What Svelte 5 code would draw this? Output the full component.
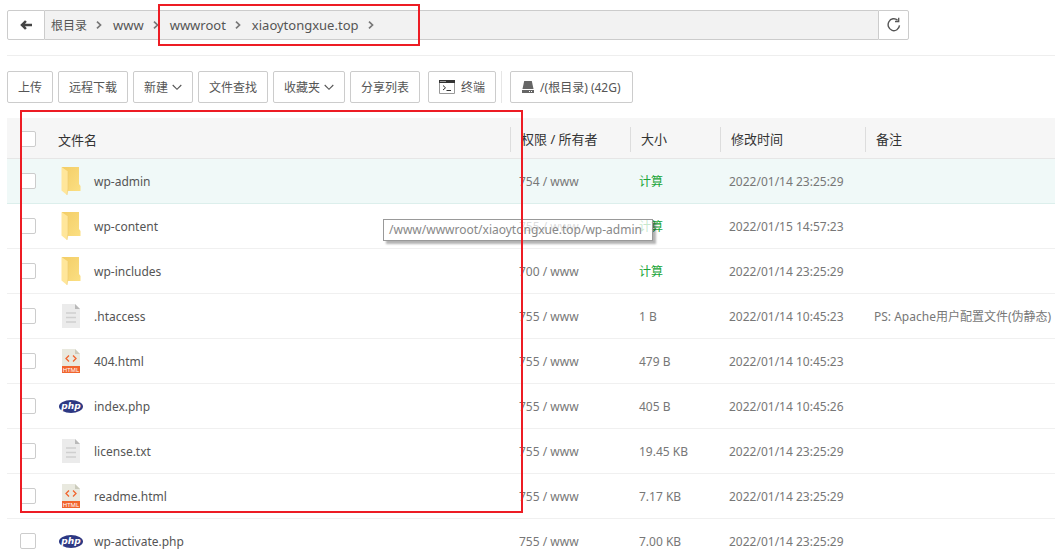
<script>
	let selected = [];
	let allChecked = false;

	const crumbs = ['根目录', 'www', 'wwwroot', 'xiaoytongxue.top'];

	const files = [
		{ name: 'wp-admin', type: 'folder', access: '754 / www', time: '2022/01/14 23:25:29' },
		{ name: 'wp-content', type: 'folder', access: '755 / www', time: '2022/01/15 14:57:23' },
		{ name: 'wp-includes', type: 'folder', access: '700 / www', time: '2022/01/14 23:25:29' },
		{
			name: '.htaccess',
			type: 'text',
			access: '755 / www',
			size: '1 B',
			time: '2022/01/14 10:45:23',
			note: 'PS: Apache用户配置文件(伪静态)'
		},
		{ name: '404.html', type: 'html', access: '755 / www', size: '479 B', time: '2022/01/14 10:45:23' },
		{ name: 'index.php', type: 'php', access: '755 / www', size: '405 B', time: '2022/01/14 10:45:26' },
		{ name: 'license.txt', type: 'text', access: '755 / www', size: '19.45 KB', time: '2022/01/14 23:25:29' },
		{ name: 'readme.html', type: 'html', access: '755 / www', size: '7.17 KB', time: '2022/01/14 23:25:29' },
		{ name: 'wp-activate.php', type: 'php', access: '755 / www', size: '7.00 KB', time: '2022/01/14 23:25:29' }
	];

	const toggleAll = () => {
		selected = allChecked ? files.map((file) => file.name) : [];
	};
</script>

<div class="file-manager">
	<nav class="path" aria-label="路径">
		<button class="path__back" aria-label="返回上一级">
			<svg width="12" height="10" viewBox="0 0 12 10">
				<path d="M5 0.2 0.2 5 5 9.8 6.8 8.2 5 6.3H12V3.7H5L6.8 1.8z" fill="#444" />
			</svg>
		</button>
		<div class="path__crumbs">
			{#each crumbs as crumb}
				<a class="path__link" href="#{crumb}">{crumb}</a>
				<svg class="path__arrow" width="6" height="8" viewBox="0 0 6 8">
					<path d="M1 0.7 4.5 4 1 7.3" fill="none" stroke="#777" stroke-width="1.7" />
				</svg>
			{/each}
		</div>
		<button class="path__refresh" aria-label="刷新">
			<svg width="14" height="16" viewBox="0 0 14 16">
				<path d="M10.6 3.2A5.7 6 0 1 0 12.5 8.4" fill="none" stroke="#555" stroke-width="1.4" />
				<path d="M11.7 0.8V4.5H8" fill="none" stroke="#555" stroke-width="1.3" />
			</svg>
		</button>
	</nav>

	<div class="toolbar">
		<button class="btn">上传</button>
		<button class="btn">远程下载</button>
		<button class="btn">
			新建
			<svg width="10" height="7" viewBox="0 0 10 7">
				<path d="M0.7 1 5 5.3 9.3 1" fill="none" stroke="#555" stroke-width="1.1" />
			</svg>
		</button>
		<button class="btn">文件查找</button>
		<button class="btn">
			收藏夹
			<svg width="10" height="7" viewBox="0 0 10 7">
				<path d="M0.7 1 5 5.3 9.3 1" fill="none" stroke="#555" stroke-width="1.1" />
			</svg>
		</button>
		<button class="btn">分享列表</button>
		<button class="btn btn--terminal">
			<svg width="16" height="14" viewBox="0 0 16 14">
				<path d="M0.5 0.5H15.5V13.5H0.5z" fill="#fff" stroke="#999" />
				<path d="M0 0H16V3H0z" fill="#333" />
				<path d="M1.5 1H2.5V2H1.5zM3.5 1H4.5V2H3.5zM5.5 1H6.5V2H5.5z" fill="#fff" />
				<path d="M4 5.5 6.5 7.8 4 10M7.5 10.5H12" fill="none" stroke="#333" />
			</svg>
			终端
		</button>
		<div class="toolbar__disks">
			<button class="btn">
				<svg width="12" height="12" viewBox="0 0 12 12">
					<path d="M2.2 0H9.8L11.5 8H0.5z" fill="#666" />
					<path d="M0 9H12V12H0z" fill="#666" />
					<path d="M7 10H8V11H7zM9 10H10V11H9z" fill="#fff" />
				</svg>
				/(根目录) (42G)
			</button>
		</div>
	</div>

	<table class="files">
		<colgroup>
			<col class="col-check" />
			<col />
			<col class="col-access" />
			<col class="col-size" />
			<col class="col-time" />
			<col class="col-note" />
		</colgroup>
		<thead>
			<tr>
				<th class="check">
					<input type="checkbox" aria-label="全选" bind:checked={allChecked} on:change={toggleAll} />
				</th>
				<th class="name">文件名</th>
				<th><span class="split">权限 / 所有者</span></th>
				<th><span class="split">大小</span></th>
				<th><span class="split">修改时间</span></th>
				<th><span class="split">备注</span></th>
			</tr>
		</thead>
		<tbody>
			{#each files as file, i}
				<tr class:active={i === 0}>
					<td class="check">
						<input type="checkbox" aria-label={file.name} value={file.name} bind:group={selected} />
					</td>
					<td class="name">
						<a class="file" href="#{file.name}">
							<span class="file__icon">
								{#if file.type === 'folder'}
									<svg width="20" height="30" viewBox="0 0 20 30">
										<defs>
											<linearGradient id="fold{i}" x2="1" y2="1">
												<stop offset="0" stop-color="#f3cd66" />
												<stop offset="1" stop-color="#fbdf82" />
											</linearGradient>
										</defs>
										<path d="M1 1H18V18L19.5 20V25H7L1 24z" fill="url(#fold{i})" />
										<path d="M0.5 1 7 5.5V23L6 29 0.5 24.5z" fill="#ffe69a" />
										<path d="M7 5.5V23L6 29" fill="none" stroke="#edca70" stroke-width="0.6" />
									</svg>
								{:else if file.type === 'text'}
									<svg width="18" height="24" viewBox="0 0 18 24">
										<path d="M0 0H13L18 5V24H0z" fill="#ebebeb" />
										<path d="M13 0 18 5H13z" fill="#b9b9b9" />
										<path d="M4 9H14M4 13.5H14M4 18H14" stroke="#cfcfcf" stroke-width="1.5" />
									</svg>
								{:else if file.type === 'html'}
									<svg width="18" height="24" viewBox="0 0 18 24">
										<path d="M0 0H13L18 5V24H0z" fill="#e9e9df" />
										<path d="M13 0 18 5H13z" fill="#cbcbbc" />
										<path d="M7 6.5 4 9.5 7 12.5M11 6.5 14 9.5 11 12.5" fill="none" stroke="#f1652e" stroke-width="1.3" />
										<path d="M0 17H18V24H0z" fill="#f1652e" />
										<text x="9" y="22.8" text-anchor="middle" font-size="6" fill="#fff">HTML</text>
									</svg>
								{:else}
									<svg width="24" height="14" viewBox="0 0 24 14">
										<ellipse cx="12" cy="7.5" rx="12" ry="6.5" fill="#2d3883" />
										<text
											x="12"
											y="10"
											text-anchor="middle"
											font-family="DejaVu Sans"
											font-size="9"
											font-weight="700"
											font-style="italic"
											fill="#fff">php</text
										>
									</svg>
								{/if}
							</span>
							{file.name}
						</a>
					</td>
					<td>{file.access}</td>
					<td>
						{#if file.size}
							{file.size}
						{:else}
							<a class="count" href="#size-{file.name}">计算</a>
						{/if}
					</td>
					<td>{file.time}</td>
					<td>{file.note ?? ''}</td>
				</tr>
			{/each}
		</tbody>
	</table>

	<div class="tooltip" role="tooltip">/www/wwwroot/xiaoytongxue.top/wp-admin</div>
	<div class="mark mark--path"></div>
	<div class="mark mark--files"></div>
</div>

<style>
	:global(body) {
		margin: 0;
		background: #fff;
	}

	.file-manager {
		position: relative;
		box-sizing: border-box;
		height: 100vh;
		padding: 10px 0 0 7px;
		overflow: hidden;
		color: #555;
		font-family: 'Noto Sans', 'Noto Sans CJK SC', sans-serif;
		font-size: 12px;
	}

	button {
		box-sizing: border-box;
		padding: 0;
		border: 1px solid #ccc;
		background: #fff;
		color: #555;
		font: inherit;
		cursor: pointer;
	}

	a {
		color: inherit;
		text-decoration: none;
	}

	svg {
		display: block;
		flex: none;
	}

	.path {
		display: flex;
		height: 30px;
		margin-right: 146px;
	}

	.path__back,
	.path__refresh {
		display: flex;
		align-items: center;
		justify-content: center;
	}

	.path__back {
		width: 38px;
		border-radius: 2px 0 0 2px;
	}

	.path__refresh {
		width: 31px;
		border-radius: 0 2px 2px 0;
	}

	.path__crumbs {
		display: flex;
		flex: 1;
		align-items: center;
		padding-left: 6px;
		border: solid #ccc;
		border-width: 1px 0;
		background: #f2f2f2;
		font-size: 13px;
	}

	.path__link:first-child {
		font-size: 12px;
	}

	.path__arrow {
		margin: 0 11px 0 9px;
	}

	.toolbar {
		display: flex;
		gap: 5px;
		margin-top: 15px;
		padding: 15px 0;
		border-top: 1px solid #eee;
	}

	.btn {
		display: flex;
		align-items: center;
		height: 32px;
		padding: 0 10px;
		border-radius: 2px;
		gap: 4px;
		white-space: nowrap;
	}

	.btn--terminal {
		margin-left: 3px;
		gap: 6px;
	}

	.toolbar__disks {
		padding-left: 8px;
		border-left: 1px solid #e6e6e6;
	}

	.toolbar__disks .btn {
		gap: 6px;
		padding: 0 11px;
	}

	.files {
		width: 100%;
		border-collapse: separate;
		border-spacing: 0;
		table-layout: fixed;
	}

	.col-check {
		width: 43px;
	}

	.col-access {
		width: 120px;
	}

	.col-size {
		width: 90px;
	}

	.col-time {
		width: 145px;
	}

	.col-note {
		width: 190px;
	}

	th,
	td {
		box-sizing: border-box;
		text-align: left;
		white-space: nowrap;
	}

	th {
		height: 41px;
		padding: 2px 0 0;
		border-bottom: 1px solid #e6e6e6;
		background: #f6f6f6;
		color: #333;
		font-size: 13px;
		font-weight: 400;
	}

	td {
		height: 45px;
		padding: 0 0 0 9px;
		border-bottom: 1px solid #f0f0f0;
		color: #777;
	}

	.split {
		display: block;
		padding-left: 10px;
		border-left: 1px solid #ddd;
		line-height: 25px;
	}

	.active td {
		border-color: #dcefec;
		background: #f0f9f8;
	}

	.check {
		padding-left: 13px;
	}

	.name {
		padding-left: 8px;
	}

	input {
		display: block;
		box-sizing: border-box;
		width: 16px;
		height: 16px;
		margin: 0;
		border: 1px solid #ccc;
		border-radius: 2px;
		background: #fff;
		appearance: none;
	}

	input:checked {
		background: #20a53a;
	}

	.file {
		display: flex;
		align-items: center;
		gap: 10px;
		color: #555;
		font-size: 12px;
	}

	.file__icon {
		display: flex;
		justify-content: center;
		width: 26px;
	}

	.count {
		color: #20a53a;
	}

	.tooltip {
		position: absolute;
		top: 219px;
		left: 383px;
		box-sizing: border-box;
		height: 22px;
		padding: 0 10px 0 5px;
		border: 1px solid #999;
		background: rgba(255, 255, 255, 0.75);
		box-shadow: 3px 3px 2px rgba(0, 0, 0, 0.3);
		color: #888;
		font-size: 12px;
		line-height: 20px;
		white-space: nowrap;
	}

	.mark {
		position: absolute;
		box-sizing: border-box;
		border: 2px solid #ed1c24;
		pointer-events: none;
	}

	.mark--path {
		top: 4px;
		left: 158px;
		width: 262px;
		height: 42px;
	}

	.mark--files {
		top: 110px;
		left: 20px;
		width: 503px;
		height: 403px;
	}
</style>
